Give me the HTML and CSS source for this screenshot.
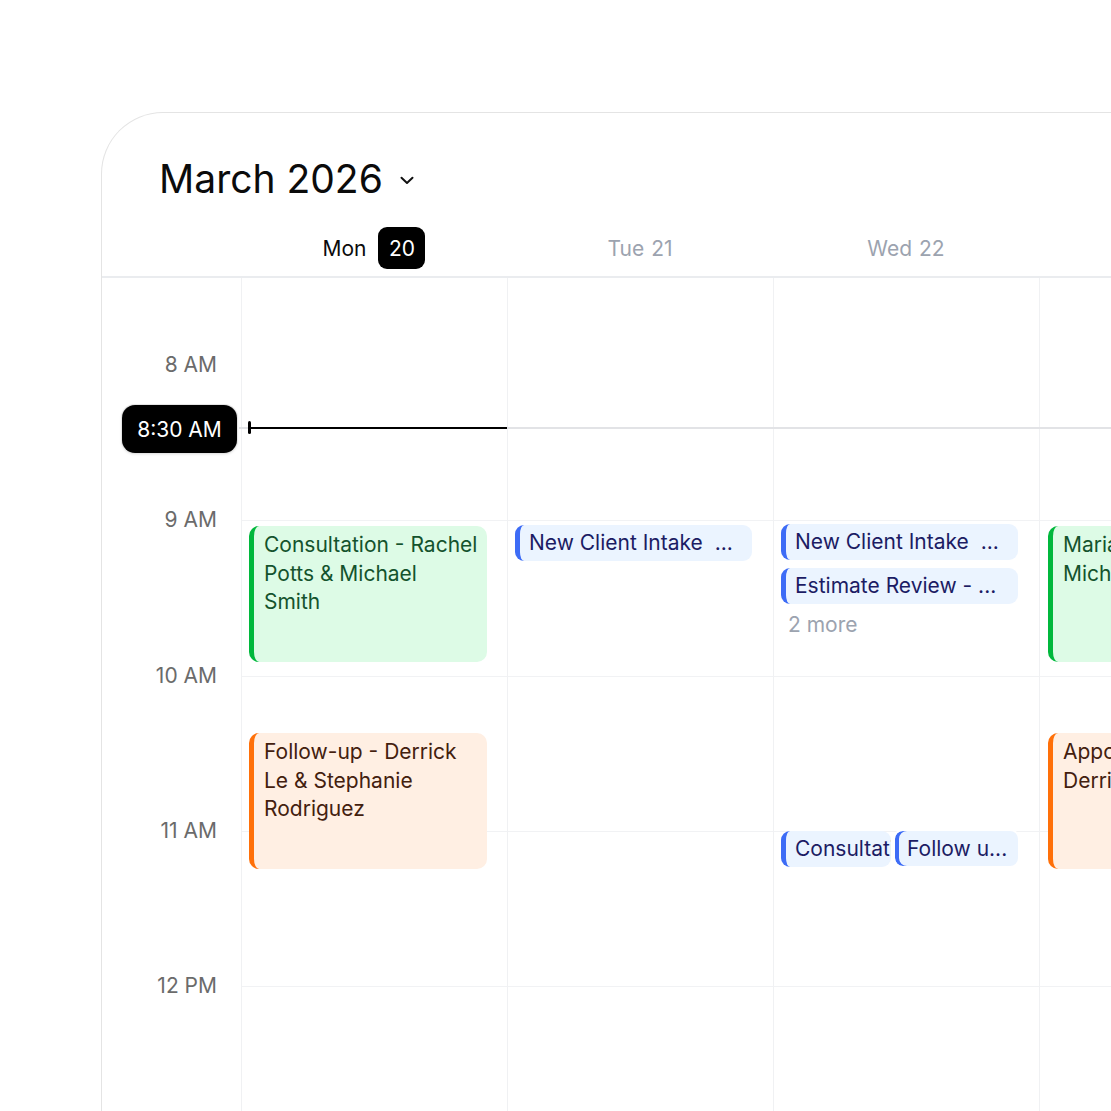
FILE: index.html
```html
<!DOCTYPE html>
<html>
<head>
<meta charset="utf-8">
<link rel="stylesheet" href="styles.css">
</head>
<body>
<div class="card">
  <div class="title-row">
    <h1 class="title">March 2026</h1>
    <svg class="chevron" width="14" height="9" viewBox="0 0 14 9"><path d="M1.5 1.8 L7 7 L12.5 1.8" fill="none" stroke="#111" stroke-width="2" stroke-linecap="round" stroke-linejoin="round"/></svg>
  </div>
  <div class="day-header">
    <div class="gutter-head"></div>
    <div class="day-head today"><span>Mon</span><span class="badge">20</span></div>
    <div class="day-head"><span>Tue</span><span>21</span></div>
    <div class="day-head"><span>Wed</span><span>22</span></div>
    <div class="day-head"><span>Thu</span><span>23</span></div>
  </div>
  <div class="grid">
    <div class="gutter">
      <div class="hour-label">8 AM</div>
      <div class="hour-label">9 AM</div>
      <div class="hour-label">10 AM</div>
      <div class="hour-label">11 AM</div>
      <div class="hour-label">12 PM</div>
      <div class="hour-label">1 PM</div>
    </div>
    <div class="day">
      <div class="slot first"></div><div class="slot"></div><div class="slot"></div><div class="slot"></div><div class="slot"></div>
      <div class="event green" style="top:248px;left:7px;width:238px;height:136px;">Consultation - Rachel Potts &amp; Michael<br>Smith</div>
      <div class="event orange" style="top:455px;left:7px;width:238px;height:136px;">Follow-up - Derrick Le &amp; Stephanie Rodriguez</div>
    </div>
    <div class="day">
      <div class="slot first"></div><div class="slot"></div><div class="slot"></div><div class="slot"></div><div class="slot"></div>
      <div class="chip" style="top:247px;left:7px;width:237px;">New Client Intake&nbsp; ...</div>
    </div>
    <div class="day">
      <div class="slot first"></div><div class="slot"></div><div class="slot"></div><div class="slot"></div><div class="slot"></div>
      <div class="chip" style="top:246px;left:7px;width:237px;">New Client Intake&nbsp; ...</div>
      <div class="chip" style="top:290px;left:7px;width:237px;">Estimate Review - ...</div>
      <div class="more" style="top:335px;left:14px;">2 more</div>
      <div class="chip" style="top:553px;left:7px;width:110px;">Consultation</div>
      <div class="chip stacked" style="top:551px;left:119px;width:127px;">Follow u...</div>
    </div>
    <div class="day">
      <div class="slot first"></div><div class="slot"></div><div class="slot"></div><div class="slot"></div><div class="slot"></div>
      <div class="event green" style="top:248px;left:8px;width:238px;height:136px;">Maria Sanchez &amp; Michael Lee</div>
      <div class="event orange" style="top:455px;left:8px;width:238px;height:136px;">Appointment - Derrick Le</div>
    </div>
    <div class="now-gray"></div>
    <div class="now-black"></div>
    <div class="now-tick"></div>
    <div class="now-pill">8:30 AM</div>
  </div>
</div>
</body>
</html>
```

FILE: styles.css
```css
html, body {
  margin: 0;
  padding: 0;
  width: 1111px;
  height: 1111px;
  overflow: hidden;
  background: #ffffff;
}

body {
  font-family: Inter, "Noto Sans", sans-serif;
  color: #111;
}

.card {
  margin: 112px 0 0 101px;
  width: 1300px;
  height: 1200px;
  border-top: 1.5px solid #e4e4e4;
  border-left: 1.5px solid #e4e4e4;
  border-top-left-radius: 62px;
  overflow: hidden;
}

.title-row {
  display: flex;
  align-items: center;
  padding: 42px 0 0 57px;
  height: 48px;
}

.title {
  margin: 0;
  font-size: 39px;
  line-height: 48px;
  font-weight: 400;
  color: #0b0b0b;
}

.chevron {
  margin-left: 17px;
  margin-top: 2px;
}

.day-header {
  display: grid;
  grid-template-columns: 139px repeat(4, 266px);
  margin-top: 24px;
  height: 42px;
  padding-bottom: 7px;
  border-bottom: 2px solid #eaecef;
}

.day-head {
  display: flex;
  align-items: center;
  justify-content: center;
  gap: 7px;
  font-size: 21px;
  color: #9ca3af;
}

.day-head.today {
  color: #0b0b0b;
  gap: 12px;
}

.badge {
  display: inline-flex;
  align-items: center;
  justify-content: center;
  width: 47px;
  height: 42px;
  border-radius: 9px;
  background: #000;
  color: #fff;
}

.grid {
  position: relative;
  display: flex;
  height: 1000px;
}

.gutter {
  width: 139px;
  flex: none;
  padding-top: 75px;
  box-sizing: border-box;
}

.hour-label {
  height: 155.33px;
  line-height: 24px;
  font-size: 21px;
  text-align: right;
  padding-right: 24px;
  color: #6b6b6b;
}

.day {
  position: relative;
  width: 266px;
  flex: none;
  border-left: 1px solid #f0f1f3;
  padding-top: 87px;
  box-sizing: border-box;
}

.slot {
  height: 155.33px;
  box-sizing: border-box;
  border-top: 1px solid #f1f2f4;
}

.slot.first {
  border-top: none;
}

.event {
  position: absolute;
  box-sizing: border-box;
  border-radius: 10px;
  border-left: 5px solid;
  padding: 5px 4px 0 10px;
  font-size: 21px;
  line-height: 28.5px;
  overflow: hidden;
}

.event.green {
  background: #ddfbe6;
  border-left-color: #00b83c;
  color: #14532d;
}

.event.orange {
  background: #ffefe3;
  border-left-color: #ff7009;
  color: #43200e;
}

.chip {
  position: absolute;
  box-sizing: border-box;
  height: 36px;
  line-height: 36px;
  border-radius: 9px;
  border-left: 5px solid #3d6cf6;
  background: #ebf4ff;
  color: #1c1c64;
  font-size: 21px;
  padding-left: 9px;
  white-space: pre;
  overflow: hidden;
}

.chip.stacked {
  height: 39px;
  line-height: 35px;
  border: 2px solid #ffffff;
  box-shadow: inset 4px 0 0 #3d6cf6;
  padding-left: 12px;
  border-radius: 10px;
}

.more {
  position: absolute;
  font-size: 21px;
  line-height: 24px;
  color: #9ca3af;
}

.now-gray {
  position: absolute;
  left: 137px;
  right: 0;
  top: 149px;
  height: 1.5px;
  background: #e2e3e6;
}

.now-black {
  position: absolute;
  left: 149px;
  width: 256px;
  top: 149px;
  height: 2px;
  background: #000;
}

.now-tick {
  position: absolute;
  left: 146px;
  top: 143px;
  width: 3px;
  height: 13px;
  border-radius: 1.5px;
  background: #000;
}

.now-pill {
  position: absolute;
  left: 20px;
  top: 127px;
  width: 115px;
  height: 48px;
  border-radius: 13px;
  background: #000;
  color: #fff;
  font-size: 21px;
  display: flex;
  align-items: center;
  justify-content: center;
  box-shadow: 0 0 0 1px #e4e4e4, 0 1px 3px rgba(0,0,0,0.15);
}
```
